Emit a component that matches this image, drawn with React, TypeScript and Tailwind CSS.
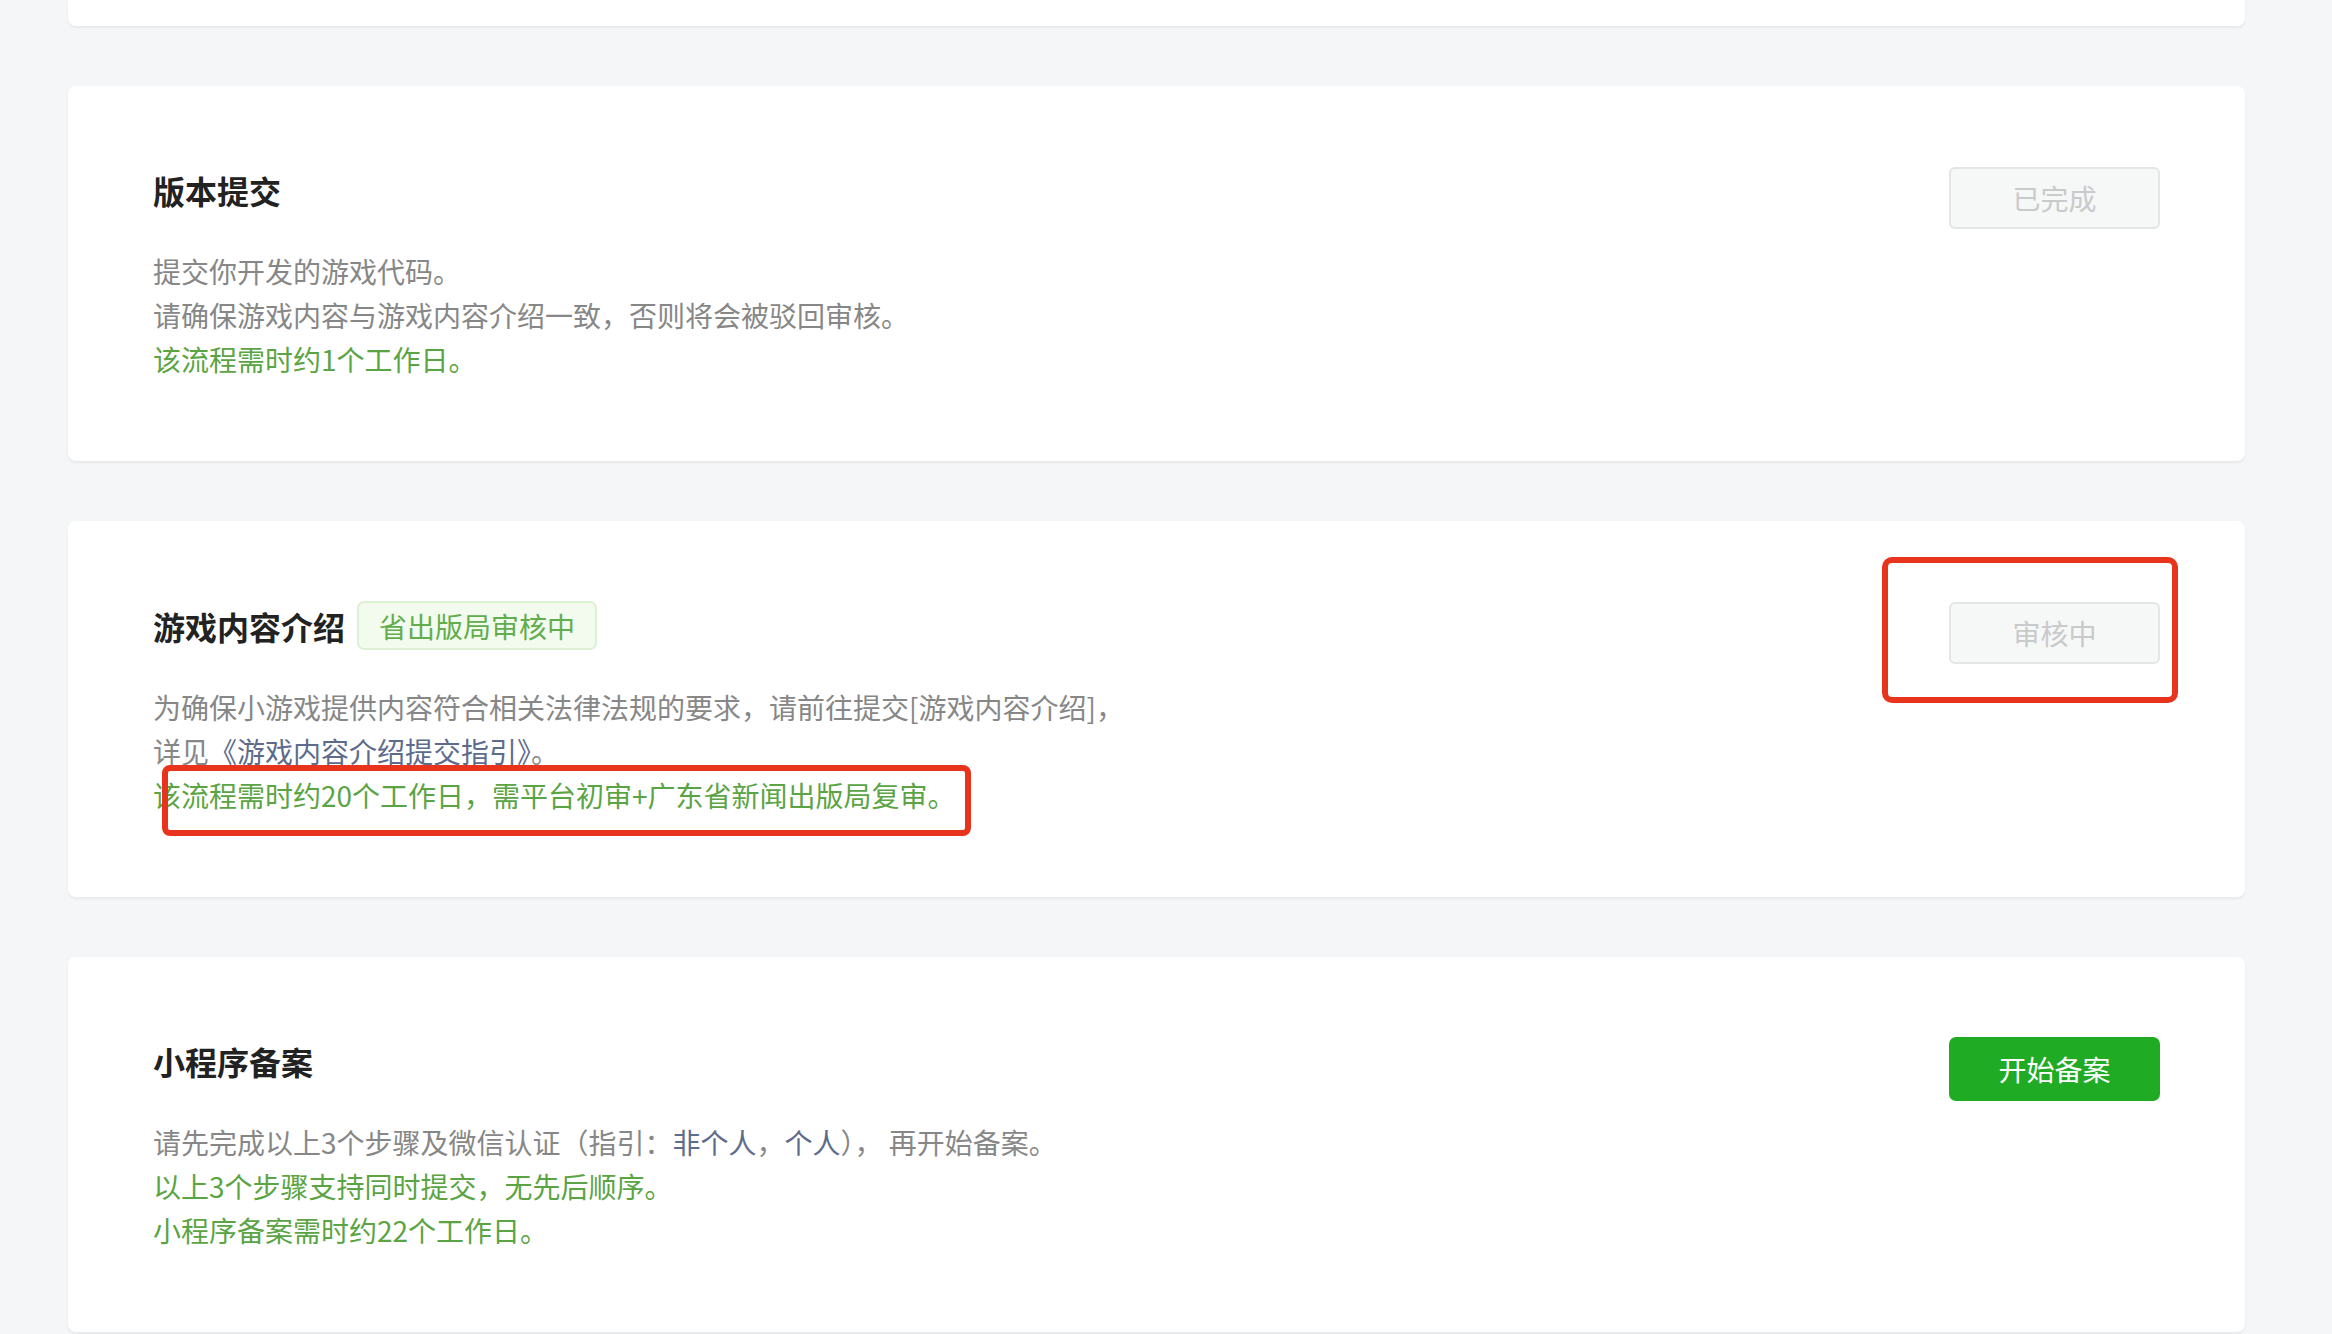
import React from "react";

const font = { fontFamily: '"Noto Sans CJK SC", "Noto Sans", sans-serif' };

function GrayButton({ label }: { label: string }) {
  return (
    <div className="mt-[1px] flex h-[62px] w-[211px] shrink-0 items-center justify-center rounded-[6px] border-2 border-[#e3e5e6] bg-[#f6f7f7] text-[28px] text-[#c8cacb]">
      {label}
    </div>
  );
}

function GreenButton({ label }: { label: string }) {
  return (
    <div className="flex h-[64px] w-[211px] shrink-0 items-center justify-center rounded-[7px] bg-[#1fab24] text-[28px] text-white">
      {label}
    </div>
  );
}

function Card({
  title,
  tag,
  button,
  children,
  overlay,
}: {
  title: string;
  tag?: string;
  button: React.ReactNode;
  children: React.ReactNode;
  overlay?: React.ReactNode;
}) {
  return (
    <div className="relative flex items-start justify-between rounded-[8px] bg-white pl-[85px] pr-[85px] pt-[80px] pb-[80px] shadow-[0_2px_3px_rgba(0,0,0,0.06)]">
      <div className="flex flex-col">
        <div className="flex items-center gap-[12px]">
          <div className="text-[32px] font-bold leading-[48px] text-[#222]">{title}</div>
          {tag && (
            <div className="flex h-[49px] items-center rounded-[7px] border-2 border-[#dcf1d3] bg-[#f3fbef] px-[20px] text-[28px] text-[#62ad4c]">
              {tag}
            </div>
          )}
        </div>
        <div className="mt-[35px] text-[28px] leading-[44px]">{children}</div>
      </div>
      {button}
      {overlay}
    </div>
  );
}

const gray = "text-[#878787]";
const green = "text-[#5ba443]";
const link = "text-[#5d6b8c]";

export default function App() {
  return (
    <div style={font} className="min-h-screen w-full bg-[#f4f6f7] pl-[68px] pr-[87px]">
      <div className="h-[26px] rounded-b-[8px] bg-white shadow-[0_2px_3px_rgba(0,0,0,0.06)]" />
      <div className="mt-[60px] flex flex-col gap-[60px]">
        <Card title="版本提交" button={<GrayButton label="已完成" />}>
          <div className={gray}>提交你开发的游戏代码。</div>
          <div className={gray}>请确保游戏内容与游戏内容介绍一致，否则将会被驳回审核。</div>
          <div className={green}>该流程需时约1个工作日。</div>
        </Card>
        <Card
          title="游戏内容介绍"
          tag="省出版局审核中"
          button={<GrayButton label="审核中" />}
          overlay={
            <>
              <div className="pointer-events-none absolute left-[1814px] top-[36px] h-[146px] w-[296px] rounded-[10px] border-[6px] border-[#e8331d]" />
              <div className="pointer-events-none absolute left-[94px] top-[244px] h-[71px] w-[809px] rounded-[8px] border-[6px] border-[#e8331d]" />
            </>
          }
        >
          <div className={gray}>为确保小游戏提供内容符合相关法律法规的要求，请前往提交[游戏内容介绍]，</div>
          <div className={gray}>
            详见<span className={link}>《游戏内容介绍提交指引》</span>。
          </div>
          <div className={green}>该流程需时约20个工作日，需平台初审+广东省新闻出版局复审。</div>
        </Card>
        <Card title="小程序备案" button={<GreenButton label="开始备案" />}>
          <div className={gray}>
            请先完成以上3个步骤及微信认证（指引：<span className={link}>非个人</span>，
            <span className={link}>个人</span>）， 再开始备案。
          </div>
          <div className={green}>以上3个步骤支持同时提交，无先后顺序。</div>
          <div className={green}>小程序备案需时约22个工作日。</div>
        </Card>
      </div>
    </div>
  );
}
